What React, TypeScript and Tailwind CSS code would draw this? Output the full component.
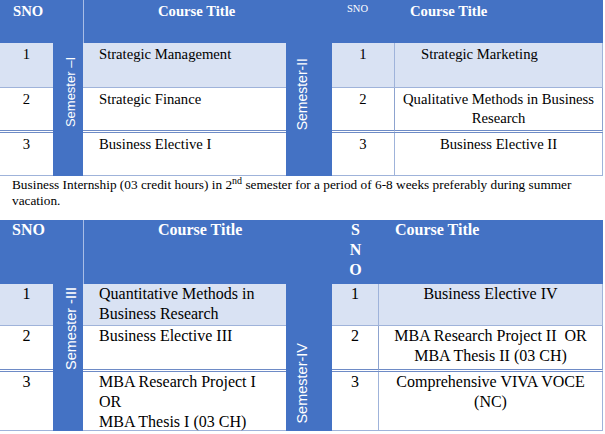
import type { ReactNode } from 'react';

const BLUE = 'bg-[#4472c4]';

function SemesterBar({ label, className, textSize }: { label: string; className: string; textSize: string }) {
    return (
        <div className={`flex flex-col items-start ${BLUE} ${className}`}>
            <span className={`rotate-180 font-['Liberation_Sans',Arial,sans-serif] ${textSize} leading-[16px] text-white [writing-mode:vertical-rl]`}>
                {label}
            </span>
        </div>
    );
}

function Cell({ className, children }: { className: string; children?: ReactNode }) {
    return <div className={className}>{children}</div>;
}

export default function App() {
    return (
        <div className="min-h-screen w-[605px] bg-white font-['Liberation_Serif','Times_New_Roman',serif] text-black">
            {/* First year, semesters I and II */}
            <div className="flex w-[603px] text-[14.67px] leading-[19px]">
                <div className="flex w-[53px] flex-col">
                    <Cell className={`h-[43px] ${BLUE} pl-[13px] pt-[2px] font-bold text-white`}>SNO</Cell>
                    <Cell className="h-[45px] border-b border-[#9fb3da] bg-[#d9e2f3] pt-[2px] text-center">1</Cell>
                    <Cell className="h-[45px] border-b-[3px] border-double border-[#6e8bc6] pt-[2px] text-center">2</Cell>
                    <Cell className="h-[43px] border-b border-[#9fb3da] pt-[2px] text-center">3</Cell>
                </div>
                <SemesterBar label="Semester –I" textSize="text-[13px]" className="w-[30px] pl-[10px] pt-[57px]" />
                <div className="flex w-[203px] flex-col">
                    <Cell className={`h-[43px] border-l border-[#a9bde6] ${BLUE} pl-[74px] pt-[2px] font-bold text-white`}>
                        Course Title
                    </Cell>
                    <Cell className="h-[45px] border-b border-[#9fb3da] bg-[#d9e2f3] pl-[16px] pt-[2px]">Strategic Management</Cell>
                    <Cell className="h-[45px] border-b-[3px] border-double border-[#6e8bc6] pl-[16px] pt-[2px]">Strategic Finance</Cell>
                    <Cell className="h-[43px] border-b border-[#9fb3da] pl-[16px] pt-[2px]">Business Elective I</Cell>
                </div>
                <SemesterBar label="Semester-II" textSize="text-[14px]" className="w-[46px] pl-[8px] pt-[58px]" />
                <div className="flex w-[63px] flex-col">
                    <Cell className={`h-[43px] ${BLUE} pl-[15px] pt-[2px] text-[10.5px] leading-[13px] text-white`}>SNO</Cell>
                    <Cell className="h-[45px] border-r border-b border-[#9fb3da] bg-[#d9e2f3] pt-[2px] text-center">1</Cell>
                    <Cell className="h-[45px] border-r border-b-[3px] border-[#8da3cf] border-b-[#6e8bc6] [border-bottom-style:double] pt-[2px] text-center">2</Cell>
                    <Cell className="h-[43px] border-r border-b border-[#9fb3da] pt-[2px] text-center">3</Cell>
                </div>
                <div className="flex w-[208px] flex-col">
                    <Cell className={`h-[43px] ${BLUE} pl-[15px] pt-[2px] font-bold text-white`}>Course Title</Cell>
                    <Cell className="h-[45px] border-r border-b border-[#9fb3da] bg-[#d9e2f3] pl-[26px] pt-[2px]">Strategic Marketing</Cell>
                    <Cell className="h-[45px] border-r border-b-[3px] border-[#8da3cf] border-b-[#6e8bc6] [border-bottom-style:double] pt-[2px] text-center">
                        Qualitative Methods in Business
                        <br />
                        Research
                    </Cell>
                    <Cell className="h-[43px] border-r border-b border-[#9fb3da] pt-[2px] text-center">Business Elective II</Cell>
                </div>
            </div>

            <p className="pb-[11px] pl-[12px] pt-[1px] text-[13.3px] leading-[16px]">
                Business Internship (03 credit hours) in 2<sup>nd</sup> semester for a period of 6-8 weeks preferably during summer
                <br />
                vacation.
            </p>

            {/* Second year, semesters III and IV */}
            <div className="flex w-[603px] text-[16px] leading-[20px]">
                <div className="flex w-[53px] flex-col">
                    <Cell className={`h-[64px] ${BLUE} pl-[12px] font-bold text-white`}>SNO</Cell>
                    <Cell className="h-[42px] border-b border-[#9fb3da] bg-[#d9e2f3] text-center">1</Cell>
                    <Cell className="h-[46px] border-b-[3px] border-double border-[#6e8bc6] text-center">2</Cell>
                    <Cell className="h-[59px] border-b border-[#9fb3da] text-center">3</Cell>
                </div>
                <SemesterBar label="Semester -III" textSize="text-[14.5px]" className="w-[30px] pl-[10px] pt-[67px]" />
                <div className="flex w-[203px] flex-col">
                    <Cell className={`h-[64px] border-l border-[#a9bde6] ${BLUE} pl-[74px] font-bold text-white`}>
                        Course Title
                    </Cell>
                    <Cell className="h-[42px] border-b border-[#9fb3da] bg-[#d9e2f3] pl-[16px]">
                        Quantitative Methods in
                        <br />
                        Business Research
                    </Cell>
                    <Cell className="h-[46px] border-b-[3px] border-double border-[#6e8bc6] pl-[16px]">Business Elective III</Cell>
                    <Cell className="h-[59px] border-b border-[#9fb3da] pl-[16px]">
                        MBA Research Project I
                        <br />
                        OR
                        <br />
                        MBA Thesis I (03 CH)
                    </Cell>
                </div>
                <SemesterBar label="Semester-IV" textSize="text-[14.5px]" className="w-[46px] pl-[8px] pt-[123px]" />
                <div className="flex w-[47px] flex-col">
                    <Cell className={`h-[64px] ${BLUE} text-center font-bold text-white`}>
                        S
                        <br />
                        N
                        <br />
                        O
                    </Cell>
                    <Cell className="h-[42px] border-r border-b border-[#9fb3da] bg-[#d9e2f3] text-center">1</Cell>
                    <Cell className="h-[46px] border-r border-b-[3px] border-[#8da3cf] border-b-[#6e8bc6] [border-bottom-style:double] text-center">2</Cell>
                    <Cell className="h-[59px] border-r border-b border-[#9fb3da] text-center">3</Cell>
                </div>
                <div className="flex w-[224px] flex-col">
                    <Cell className={`h-[64px] ${BLUE} pl-[16px] font-bold text-white`}>Course Title</Cell>
                    <Cell className="h-[42px] border-r border-b border-[#9fb3da] bg-[#d9e2f3] text-center">Business Elective IV</Cell>
                    <Cell className="h-[46px] border-r border-b-[3px] border-[#8da3cf] border-b-[#6e8bc6] [border-bottom-style:double] text-center">
                        MBA Research Project II&nbsp; OR
                        <br />
                        MBA Thesis II (03 CH)
                    </Cell>
                    <Cell className="h-[59px] border-r border-b border-[#9fb3da] text-center">
                        Comprehensive VIVA VOCE
                        <br />
                        (NC)
                    </Cell>
                </div>
            </div>
        </div>
    );
}
